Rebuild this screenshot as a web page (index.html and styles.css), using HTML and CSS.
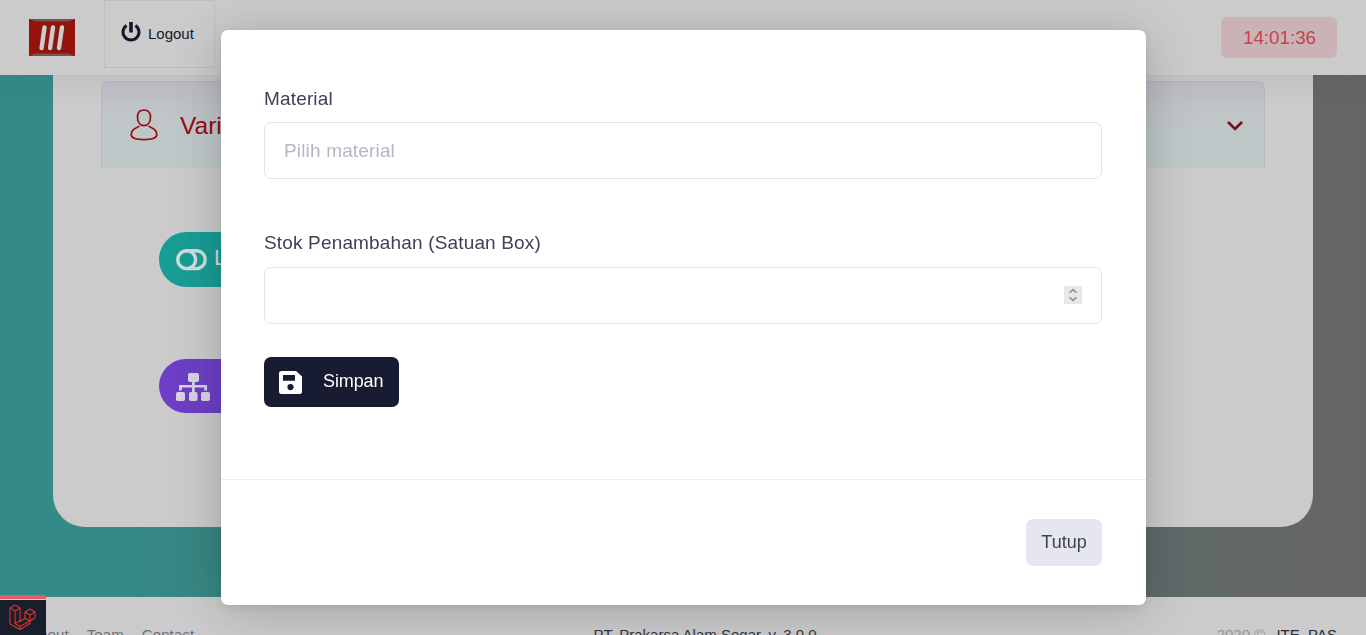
FILE: index.html
```html
<!DOCTYPE html>
<html lang="id">
<head>
<meta charset="utf-8">
<title>Stok Material</title>
<link rel="stylesheet" href="styles.css">
</head>
<body>
<div class="page">
  <header class="header">
    <svg class="logo" width="46" height="37" viewBox="0 0 46 37">
      <rect width="46" height="37" fill="#96130c"/>
      <path d="M1 0H45L40 2.500H6ZM1 37H45L40 34.500H6Z" fill="#705653"/>
      <path d="M15.500 8.500 12.600 29M24 8.500 21.100 29M33 8.500 30 29" stroke="#6b2724" stroke-width="6" stroke-linecap="round"/>
      <path d="M15.500 8.500 12.600 29M24 8.500 21.100 29M33 8.500 30 29" stroke="#d5c9c8" stroke-width="4.400" stroke-linecap="round"/>
    </svg>
    <div class="logout">
      <svg width="20" height="20" viewBox="0 0 20 20" fill="none" stroke="#15182b" stroke-width="3">
        <path d="M5.600 3.400A8 8 0 1 0 14.400 3.400"/><path d="M10 0V10.500" stroke-width="3.600"/>
      </svg>
      <span>Logout</span>
    </div>
    <div class="clock">14:01:36</div>
  </header>
  <main class="main">
    <section class="card">
      <div class="accordion">
        <svg class="user" width="28" height="32" viewBox="0 0 28 32" fill="none" stroke="#980b10" stroke-width="1.700">
          <path d="M14 1C9.500 1 7.500 4 7.500 8C7.500 13 10 16.700 14 16.700S20.500 13 20.500 8C20.500 4 18.500 1 14 1Z"/>
          <path d="M9.500 17C7.500 19 1.200 19 1.200 25.500C1.200 28.500 6 30.600 14 30.600S26.800 28.500 26.800 25.500C26.800 19 20.500 19 18.500 17"/>
        </svg>
        <span class="accordion-title">Varian</span>
        <svg class="chevron" width="16" height="10" viewBox="0 0 16 10" fill="none" stroke="#800a0e" stroke-width="2.600"><path d="M1 1 8 8 15 1"/></svg>
      </div>
      <div class="pill teal">
        <svg width="31" height="22" viewBox="0 0 31 22" fill="none" stroke="#cfdedd" stroke-width="3.400">
          <circle cx="10.700" cy="10.700" r="8.900"/><path d="M10.700 1.800H20.300A8.900 8.900 0 0 1 20.300 19.600H10.700"/>
        </svg>
        <span>Lihat</span>
      </div>
      <div class="pill purple">
        <svg width="34" height="28" viewBox="0 0 34 28" fill="#d9d3e5">
          <rect x="12" y="0" width="11" height="9" rx="1.800"/>
          <rect x="0" y="19" width="9" height="9" rx="1.800"/><rect x="13" y="19" width="8.500" height="9" rx="1.800"/><rect x="25" y="19" width="9" height="9" rx="1.800"/>
          <path d="M16 8H18.800V12H31V17.500H28.300V14.600H18.800V19H16V14.600H5.800V17.500H3V12H16Z"/>
        </svg>
      </div>
    </section>
  </main>
  <footer class="footer">
    <nav class="links"><span>About</span><span>Team</span><span>Contact</span></nav>
    <div class="company">PT. Prakarsa Alam Segar. v. 3.0.0</div>
    <div class="copy">2020 © <b>ITE_PAS</b></div>
  </footer>
</div>
<div class="modal-layer">
  <div class="modal">
    <form class="modal-body">
      <label>Material</label>
      <div class="field placeholder">Pilih material</div>
      <label class="second">Stok Penambahan (Satuan Box)</label>
      <div class="field number">
        <svg width="18" height="18" viewBox="0 0 18 18" fill="none"><rect width="18" height="18" fill="#e8e8ea"/><path d="M5.500 6.800 9 3.600 12.500 6.800M5.500 11.200 9 14.400 12.500 11.200" stroke="#8d8d91" stroke-width="1.500"/></svg>
      </div>
      <div class="save">
        <svg width="23" height="23" viewBox="0 0 23 23"><path fill="#fff" fill-rule="evenodd" d="M2.500 0H17L23 5.500V20.500Q23 23 20.500 23H2.500Q0 23 0 20.500V2.500Q0 0 2.500 0ZM4 4V9.700H16V4ZM11.500 13A3.100 3.100 0 1 0 11.500 19.200A3.100 3.100 0 1 0 11.500 13Z"/></svg>
        <span>Simpan</span>
      </div>
    </form>
    <div class="modal-footer"><div class="close">Tutup</div></div>
  </div>
</div>
<div class="debugbar">
  <svg width="27" height="27" viewBox="0 0 27 27" fill="none" stroke="#d5362d" stroke-width="1.100" stroke-linejoin="round">
    <path d="M1 4 6 1 11 4V17.500L16 14.600V8L21 5 26 8V14L21 17V19.500L11 25.500 1 20ZM1 4 6 7 11 4M6 7V19.500L11 22.500V25.500M6 19.500 16 14.600 21 17 11 22.500M16 8 21 11 26 8M21 11V17"/>
  </svg>
</div>
</body>
</html>
```

FILE: styles.css
```css
* { box-sizing: border-box; }
body { margin: 0; height: 635px; overflow: hidden; font-family: "Liberation Sans", Arial, sans-serif; }
.page { height: 635px; overflow: hidden; display: flex; flex-direction: column; background: linear-gradient(90deg, #348a86 0%, #348a86 8%, #656565 97%, #656565 100%); }
.header { flex: none; height: 75px; display: flex; align-items: flex-start; padding: 0 29px; background: #cbcbcb; box-shadow: 0 6px 24px rgba(70, 65, 95, .1); z-index: 1; }
.logo { margin-top: 19px; }
.logout { width: 111px; height: 68px; margin-left: 29px; display: flex; gap: 7px; padding: 21px 0 0 16px; border: 1px solid #bbbfc2; font-size: 15px; line-height: 23px; color: #15182b; }
.clock { width: 116px; height: 41px; margin: 17px 0 0 auto; padding-left: 1px; border-radius: 6px; background: #cbb3b5; color: #c34350; font-size: 18.8px; line-height: 41px; text-align: center; }
.main { flex: none; height: 522px; padding: 0 53px; }
.card { height: 452px; padding: 6px 48px; background: #cbcbcb; border-radius: 0 0 32px 32px; }
.accordion { height: 87px; display: flex; align-items: center; padding: 0 21px 0 28px; border: 1px solid #b7b9c1; border-bottom: 0; border-radius: 7px 7px 0 0; background: linear-gradient(#bfc0c7, #bfc1c7 20%, #bfc7c8 50%); color: #980b10; }
.user { margin-top: -1px; }
.accordion-title { margin: 1px 0 0 22px; font-size: 24.5px; }
.chevron { margin: 1px 0 0 auto; }
.pill { width: 240px; margin-left: 58px; display: flex; align-items: center; padding-left: 17px; border-radius: 28px; }
.teal { height: 55px; margin-top: 64px; background: #189d95; color: #cfdedd; font-size: 22px; }
.teal span { margin: -3px 0 0 7px; }
.purple { height: 54px; margin-top: 72px; background: #6c3fc6; }
.purple svg { margin-top: 2px; }
.footer { flex: none; height: 75px; display: grid; grid-template-columns: 1fr auto 1fr; padding: 29px 29px 0; background: #cbcbcb; font-size: 15px; line-height: 18px; color: #353641; }
.links { display: flex; gap: 18px; letter-spacing: .1px; color: #6f6e7e; }
.company { padding-left: 44px; }
.copy { text-align: right; color: #94939d; }
.copy b { font-weight: 400; margin-left: 7px; color: #292a38; }
.modal-layer { position: fixed; inset: 0; z-index: 10; display: flex; justify-content: center; padding: 30px 220px 0 221px; }
.modal { width: 925px; height: 575px; background: #fff; border-radius: 7px; box-shadow: 0 6px 50px rgba(0, 0, 0, .2), 0 2px 8px rgba(0, 0, 0, .08); }
.modal-body { height: 449px; padding: 57px 44px 0 43px; display: flex; flex-direction: column; color: #3f4254; font-size: 19px; letter-spacing: .16px; }
.modal-body label { line-height: 23px; }
.modal-body .second { margin-top: 52px; }
.field { height: 57px; flex: none; margin-top: 12px; border: 1px solid #e2e4e9; border-radius: 7px; padding: 0 19px; display: flex; align-items: center; }
.placeholder { color: #b5b5c3; }
.number { justify-content: flex-end; margin-top: 13px; padding-bottom: 1px; }
.save { width: 135px; height: 50px; margin-top: 33px; padding-left: 15px; border-radius: 7px; background: #181c32; color: #fff; display: flex; align-items: center; gap: 21px; font-size: 18px; letter-spacing: -.1px; }
.save svg { margin-top: 1px; }
.save span { margin-top: -2px; }
.modal-footer { height: 126px; border-top: 1px solid #ebedf3; padding: 39px 44px; display: flex; justify-content: flex-end; }
.close { width: 76px; height: 47px; border-radius: 7px; background: #e5e6f0; color: #3f4254; font-size: 18px; line-height: 46px; text-align: center; }
.debugbar { position: fixed; left: 0; bottom: 0; z-index: 20; width: 46px; height: 40px; padding: 5px 0 0 9px; border-top: 4px solid #e35c62; background: #191e2c; box-shadow: inset 0 1px #d9cdd0; }
```
